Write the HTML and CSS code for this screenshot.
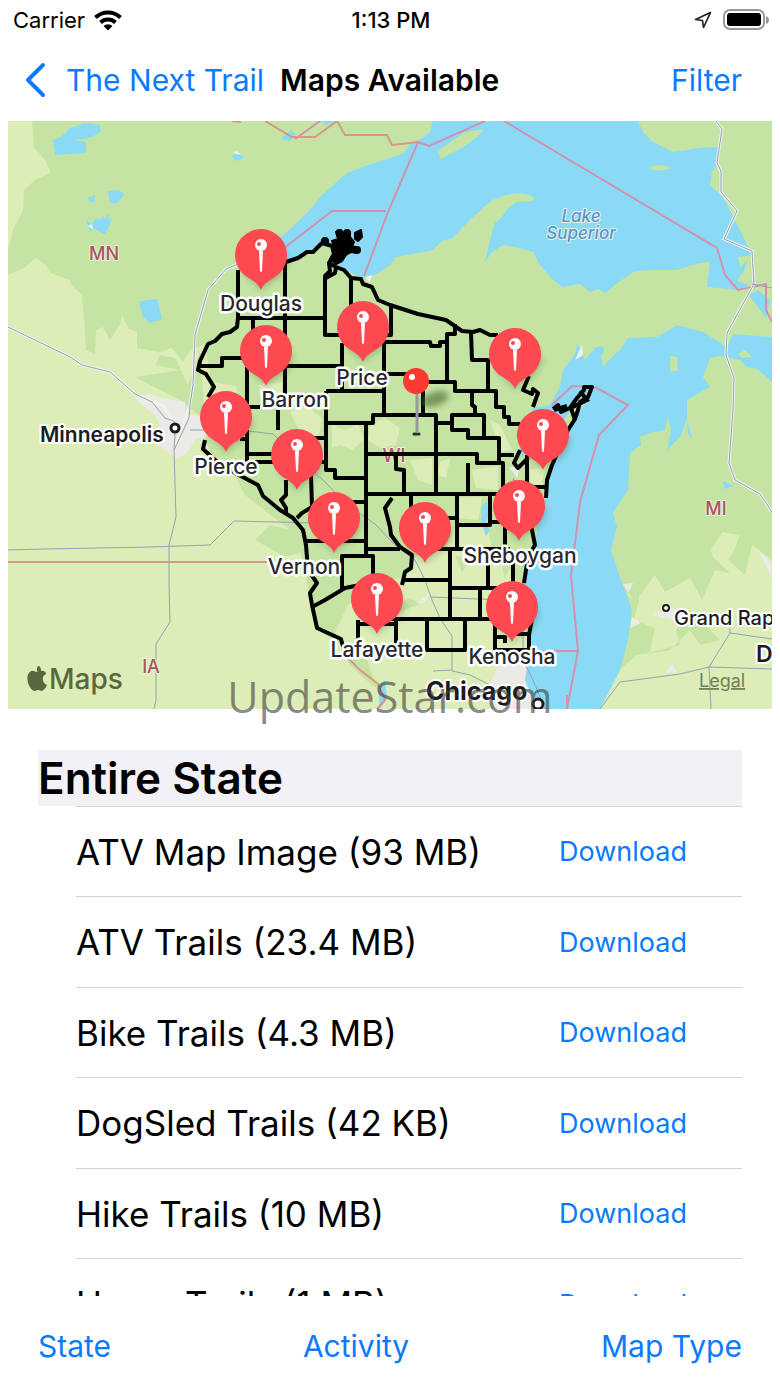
FILE: index.html
```html
<!DOCTYPE html>
<html lang="en">
<head>
  <meta charset="UTF-8">
  <meta name="viewport" content="width=device-width, initial-scale=1">
  <title>Maps Available</title>
  <link rel="stylesheet" href="styles.css">
</head>
<body>
  <div class="status-bar">
    <div class="carrier">
      <span>Carrier</span>
      <svg width="30" height="22" viewBox="0 0 30 22">
        <g fill="none" stroke="#000" stroke-width="4">
          <path d="M2.500 8.500A18 18 0 0 1 27.500 8.500"/>
          <path d="M7.500 13.500A11 11 0 0 1 22.500 13.500"/>
        </g>
        <path d="M10.500 17a6.500 6.500 0 0 1 9 0L15 21.500z"/>
      </svg>
    </div>
    <div class="time">1:13 PM</div>
    <div class="status-icons">
      <svg width="18" height="18" viewBox="0 0 18 18">
        <path d="M16.500 1.500L1.500 8.500L8.500 9.500L9.500 16.500Z" fill="none" stroke="#222" stroke-width="1.700" stroke-linejoin="round"/>
      </svg>
      <svg width="46" height="22" viewBox="0 0 46 22">
        <rect x="1" y="1" width="40" height="19" rx="6" fill="none" stroke="#999" stroke-width="2"/>
        <rect x="4" y="4" width="34" height="13" rx="3"/>
        <path d="M43 7q3 1 3 4t-3 4z" fill="#999"/>
      </svg>
    </div>
  </div>

  <nav class="nav-bar">
    <a class="back" href="#">
      <svg width="22" height="36" viewBox="0 0 22 36">
        <path d="M19 3L4 18L19 33" fill="none" stroke="#0a7aff" stroke-width="4" stroke-linecap="round" stroke-linejoin="round"/>
      </svg>
      <span>The Next Trail</span>
    </a>
    <h1>Maps Available</h1>
    <button class="filter">Filter</button>
  </nav>

  <div class="map">
    <svg class="map-canvas" viewBox="8 121 764 588">
      <defs>
        <g id="pin">
          <path class="pin-shadow" d="M-15 22Q-7 27 0 36Q8 28 20 22L28 7L20 -10L-20 0Z"/>
          <path d="M0 35C-3 28 -8 26 -14 22A26 26 0 1 1 14 22C8 26 3 28 0 35Z" fill="#fe4950"/>
          <path d="M-2 -4L-1 16Q0 18 1 16L2 -4Z" fill="#fff"/>
          <circle cy="-10" r="6" fill="#fff"/>
          <circle cx="-2" cy="-11" r="2" fill="#fe4950"/>
        </g>
        <filter id="soft" x="-50%" y="-50%" width="200%" height="200%">
          <feGaussianBlur stdDeviation="3"/>
        </filter>
      </defs>

      <!-- land -->
      <rect x="8" y="121" width="764" height="588" fill="#c5e4a3"/>
      <g fill="#dcedb7">
        <path d="M8 121H32L34 147L45 160L51 173L35 180L24 190L23 210L13 230L8 250Z"/>
        <path d="M8 275L24 268L36 258L46 265L50 273L70 280L72 286L82 295L85 330L86 350L95 354L96 330L103 327L110 340L120 325L122 315L129 329L137 332L137 348L148 350L160 352L172 348L183 362L190 350L205 345L210 375L205 440L215 460L237 476L262 500L290 517L303 535L270 540L300 552L310 595L317 630L342 645H527L540 709H8Z"/>
        <path d="M600 709L620 670L636 655L650 652L655 628L634 620L640 595L655 575L665 592L690 578L702 600L715 570L730 573L713 557L711 550L722 532L740 535L735 548L728 560L745 575L752 545L772 560V709Z"/>
        <path d="M332 425L345 430L358 424L364 440L352 450L340 445L332 448ZM370 425L385 418L400 428L396 445L380 448L368 440Z"/>
        <path d="M410 460L432 458L432 485L418 480ZM440 462L450 458L446 478L438 475Z"/>
        <path d="M348 605L370 585L400 578L418 555L445 550L455 528L488 527L492 550L505 560L512 575L526 590L530 650H345L335 632Z"/>
        <path d="M458 498L482 497L478 520L458 518ZM472 470L498 466V490L476 488ZM490 420L500 425L512 450L500 452ZM530 470L545 466L542 485L530 484Z"/>
        <path d="M258 385L282 382V405L262 402ZM290 412L305 405L322 418L318 440L300 432ZM210 382L236 386L240 400L215 400Z"/>
      </g>
      <g fill="#c5e4a3">
        <path d="M135 377L180 370L155 365L160 355L175 358L188 385L200 350L205 420L180 400Z"/>
        <path d="M235 475L262 470L290 490L310 520L315 575L300 570L310 550L285 557L255 540L270 525L290 530L245 495Z"/>
        <path d="M344 655L365 650L370 670L380 690L372 685L350 665Z"/>
        <path d="M395 605L410 598L420 604L400 612ZM455 555L470 560L462 572Z"/>
        <path d="M640 655L670 650L690 630L700 645L720 640L700 620L690 610L676 630L680 645L660 650Z"/>
        <path d="M500 555L513 555L505 580Z"/>
      </g>
      <g fill="#eceae6">
        <path d="M135 397L150 394L160 398L185 402L185 414L210 418L210 435L195 440L188 452L177 459L165 450L150 440L160 425L155 415L138 402Z"/>
        <path d="M497 668L520 662L530 670L541 709H495L488 690Z"/>
        <path d="M652 615L668 605L678 612L685 622L665 618ZM623 584L633 583L628 594L634 602ZM632 617L641 623L630 628ZM665 673L672 664L677 672ZM757 548L770 562L772 578L768 570ZM416 604L430 592L425 602ZM509 467L520 467L517 478Z"/>
      </g>

      <!-- water -->
      <g fill="#8adaf6">
        <path d="M433 121L430 132L423 138L412 142L404 153L390 158L365 166L347 173L332 186L320 197L308 212L287 232L262 252V270L287 262L310 252L333 243L329 264L345 270L363 278L375 275L390 265L396 257L407 255L433 250L442 241L453 238L463 227L473 217L485 206L493 200L505 195L517 193L530 195L534 198L533 201L517 202L508 208L502 217L495 223L492 232L485 262L492 252L503 245L515 247L533 252L540 265L553 280L563 287L580 284L590 292L598 289L605 293L616 284L635 271L650 270L677 270L695 264L710 262L707 287L720 288L737 290L750 285L737 281L745 269L747 260L740 268L738 257L752 255L735 220L723 197L710 185L712 172L716 167L718 147L700 148L673 152L653 142L643 132L638 121Z"/>
        <path d="M628 338L657 337L677 325L703 332L727 347L733 334L772 337V382L757 369L747 367L740 360L722 356L710 358L703 377L710 387L687 400L687 419L680 437L667 450L671 430L668 417L665 430L653 432L640 437L641 445L630 453L628 490L613 513L617 527L611 550L620 577L632 610L628 640L620 670L600 709H537L525 680L527 667L530 627L523 583L530 557L537 533L536 510L547 497L549 475L557 455L567 433L587 400L592 388L575 405L560 425L555 415L530 450L513 463L520 450L533 408L550 405L560 387L563 370L575 354L577 344L585 360L596 347L603 346L606 360L620 350Z"/>
        <path d="M53 140L61 137L70 128L85 123L100 125L101 132L92 137L84 139L75 140L86 142L86 153L55 155ZM87 198L95 195L94 203L91 202ZM108 191L119 190L124 194L118 203L110 203ZM86 220L92 224L96 218L100 220L103 215L104 219L109 213L108 219L112 218L109 227L105 234L94 229L90 231ZM139 302L147 300L157 299L162 319L150 323L143 317ZM231 156L237 153L245 157L237 161ZM281 139L291 130L296 134L290 141ZM322 121H336L326 125ZM482 505L487 502L489 515L485 523L490 530L486 536L481 522ZM723 481L734 486L724 489ZM687 420L692 438L688 434ZM749 295L758 290L770 300L766 318ZM316 529L307 524L316 534ZM378 688L385 680L387 699L380 709Z"/>
      </g>
      <g fill="#c5e4a3">
        <path d="M437 151L441 159L463 147L476 138L484 129L465 132Z"/>
        <path d="M648 168Q658 162 671 168Q658 173 648 168Z"/>
        <path d="M670 356L677 357L678 370L670 372ZM603 367L622 346L614 343L601 355ZM738 354L745 350L752 357L742 358Z"/>
      </g>
      <path class="dry" d="M582 345L583 355L575 360ZM366 277L372 275L369 283ZM233 153L237 151L241 155ZM88 226L92 224L93 230Z"/>

      <!-- state and country borders -->
      <g fill="none" stroke="#d391b0" stroke-width="2">
        <path d="M504 121L717 248L725 275L738 290L766 284V310L772 322"/>
        <path d="M485 121L429 146L418 142L388 212L364 276"/>
        <path d="M283 249L332 211H386M295 139L320 121"/>
        <path d="M567 695V709L578 651L571 576L580 502L599 435L628 405L595 387L572 386L552 405M540 651H578"/>
      </g>
      <g fill="none" stroke="#dd9585" stroke-width="2">
        <path d="M232 121L241 122M265 121L292 137L315 137L337 121L345 135H387L392 145L418 142"/>
        <path d="M8 562H275M345 655L360 670L378 684L385 700L377 709"/>
      </g>

      <!-- roads -->
      <g class="road-edge">
        <path d="M716 121L722 129L717 163L721 171V192L737 211L724 239L752 251L754 284L727 333L726 355L734 378L733 410L729 463L735 480L760 494L772 512"/>
        <path d="M8 327L70 357L82 365L110 372L135 394L165 407L175 425M238 264L226 269L208 290L195 335L193 385L190 405L174 450"/>
      </g>
      <g class="road">
        <path d="M716 121L722 129L717 163L721 171V192L737 211L724 239L752 251L754 284L727 333L726 355L734 378L733 410L729 463L735 480L760 494L772 512"/>
        <path d="M752 284L772 288M8 327L70 357L82 365L110 372L135 394L152 402L165 418L174 421L175 437L174 450L176 517L169 545V585L170 622L156 644V700L154 709"/>
        <path d="M238 264L226 269L208 290L195 335L193 385L190 405L189 418L174 450"/>
        <path d="M8 550L45 549L150 547L210 545L234 521L315 523M190 430H240L273 434L295 455L325 482L347 505L375 524L395 545L415 560L425 580L432 600L441 620L452 636V670L433 671M452 671L470 675L500 690"/>
        <path d="M431 597L500 600M513 478L522 500M530 557L523 580L523 660L533 680L545 709"/>
        <path d="M600 709L620 682L680 674L709 667L772 669M709 667L730 633L772 639M730 633V628M709 667L711 709"/>
      </g>

      <!-- state names -->
      <g class="state">
        <text x="104" y="260">MN</text>
        <text x="151" y="673">IA</text>
        <text x="716" y="515">MI</text>
        <text x="394" y="462">WI</text>
      </g>

      <!-- county lines -->
      <g class="county">
        <path d="M286 262L298 258L307 252L313 252L322 243L332 246L334 254L329 263L336 267L344 270L351 278L361 279L363 284L372 287L378 300L390 305L418 314L446 320L462 331L473 332L480 330L490 335L498 335"/>
        <path d="M329 263L330 271L325 276V335H352M336 267L335 273L326 278M351 278V318M391 305V335H382"/>
        <path d="M238 270V318L237 327L230 332L222 334L215 341L208 344L200 361L198 370L206 374L214 387L208 397M238 318H326M253 318V335M285 262V395M200 366H222V358H245M247 367V407H260M285 366H342M342 343V390M326 391H383M326 391V470H335V478H365"/>
        <path d="M384 415V342H430L431 346H440V342H447V334H455V324M447 334V382M384 374H416M423 382V415M410 382H455V391H496V407H504V417H509V424H520M471 333L472 360H488V390M472 391V405L475 407V415"/>
        <path d="M327 423H373V415H436V495M436 423H452V415H484V438M452 423V430H468V438H499V463M499 455H514M365 454H477V463H503V490M468 495V463M366 423V555M396 455V469L404 470V494M366 494H510"/>
        <path d="M411 495V510M440 518H457M457 495V549M457 525H490V495M490 522H502M505 515V545M366 549H400M430 549H510"/>
        <path d="M392 498L385 508L390 527L391 535L400 547L412 555L411 568L405 572L402 585M402 580H450M450 550V618M450 588H512M488 550V587M513 560V585M480 588V617M380 619H510M396 620V650M427 620V650H465V620M495 650H529M495 625V650M495 637H505V643M515 634H530"/>
        <path d="M342 590V556H373V580M312 607L325 600L345 588L360 585M358 620V645M358 624H398M305 541H365M350 502H365"/>
        <path d="M278 410V430M247 430V462M240 439H247M248 454H275M248 462H275M310 438H327M320 462H327M286 480V495L281 500L286 508V514M311 475L312 507L302 513L297 518M527 455V487H545"/>
        <path d="M205 440L203 449L215 460L237 474L258 485L263 496L280 510L293 518L303 530L306 545L308 570L317 583L310 593L312 605L317 628L330 634L341 639L344 650"/>
        <path d="M529 376L523 390L532 394L533 389L538 393L533 407M520 450L514 463L518 468L528 458M553 409L558 405L561 412L570 408L577 398L584 390L584 387L592 387L588 397L580 402L578 410L575 419L568 430L552 465L547 480L546 498M531 525L535 545L528 557L524 583M532 619L529 635V650"/>
      </g>
      <!-- islands -->
      <g stroke="#000" stroke-width="2" stroke-linejoin="round">
        <path d="M355 233L361 230L362 237L358 241L355 239Z"/>
        <path d="M332 241L338 239L336 232L341 230L344 234L350 232L350 237L354 242L352 246L358 248L357 253L351 252L346 255L342 261L336 264L332 260L337 254Z"/>
        <circle cx="339" cy="232" r="2"/>
        <circle cx="325" cy="241" r="3"/>
        <circle cx="357" cy="250" r="3"/>
        <circle cx="347" cy="233" r="3"/>
      </g>
      <path d="M554 410L567 406M580 391L587 400L571 408L575 420" fill="none" stroke="#000" stroke-width="4"/>

      <g class="lake">
        <text x="581" y="222">Lake</text>
        <text x="581" y="239">Superior</text>
      </g>

      <!-- cities -->
      <g class="city">
        <text x="40" y="442">Minneapolis</text>
        <text x="674" y="625" class="small">Grand Rapids</text>
        <text x="756" y="662" class="mid">Detroit</text>
        <text x="426" y="700" class="big">Chicago</text>
      </g>
      <g fill="#fff" stroke="#1c1c1c" stroke-width="3">
        <circle cx="175" cy="428" r="4"/>
        <circle cx="666" cy="608" r="3" stroke-width="2"/>
        <circle cx="538" cy="704" r="5"/>
      </g>

      <!-- pins -->
      <ellipse cx="435" cy="399" rx="14" ry="7" fill="#54723d" opacity=".7" filter="url(#soft)" transform="rotate(-18 435 399)"/>
      <path d="M414 434H419" stroke="#243524" stroke-width="3" stroke-linecap="round"/>
      <path d="M417 390V433" stroke="#999" stroke-width="3"/>
      <circle cx="416" cy="381" r="13" fill="#fe3a30"/>
      <circle cx="412" cy="377" r="3" fill="#fff"/>
      <use href="#pin" x="261" y="255"/>
      <use href="#pin" x="363" y="327"/>
      <use href="#pin" x="266" y="351"/>
      <use href="#pin" x="515" y="354"/>
      <use href="#pin" x="226" y="417"/>
      <use href="#pin" x="543" y="435"/>
      <use href="#pin" x="297" y="455"/>
      <use href="#pin" x="334" y="518"/>
      <use href="#pin" x="425" y="528"/>
      <use href="#pin" x="519" y="506"/>
      <use href="#pin" x="377" y="599"/>
      <use href="#pin" x="512" y="607"/>
      <g class="pin-label">
        <text x="261" y="311">Douglas</text>
        <text x="362" y="385">Price</text>
        <text x="295" y="407">Barron</text>
        <text x="226" y="474">Pierce</text>
        <text x="304" y="574">Vernon</text>
        <text x="377" y="657">Lafayette</text>
        <text x="512" y="664">Kenosha</text>
        <text x="520" y="563">Sheboygan</text>
      </g>

      <!-- attribution -->
      <path d="M41 671Q41 666 38 666Q36 668 37 671ZM36 672Q40 670 44 671Q46 672 46 674Q42 676 43 680Q43 683 47 685Q44 691 41 691Q38 689 35 691Q31 691 28 683Q26 674 31 671Q33 670 36 672Z" fill="#59683f"/>
      <text class="maps-logo" x="49" y="689">Maps</text>
      <a href="#"><text class="legal" x="699" y="687">Legal</text></a>
    </svg>
    <div class="watermark">UpdateStar.com</div>
  </div>

  <main class="downloads">
    <h2>Entire State</h2>
    <ul>
      <li><span>ATV Map Image (93 MB)</span><button>Download</button></li>
      <li><span>ATV Trails (23.4 MB)</span><button>Download</button></li>
      <li><span>Bike Trails (4.3 MB)</span><button>Download</button></li>
      <li><span>DogSled Trails (42 KB)</span><button>Download</button></li>
      <li><span>Hike Trails (10 MB)</span><button>Download</button></li>
      <li><span>Horse Trails (1 MB)</span><button>Download</button></li>
    </ul>
  </main>

  <footer class="toolbar">
    <button>State</button>
    <button>Activity</button>
    <button>Map Type</button>
  </footer>
</body>
</html>
```
FILE: styles.css
```css
* {
  box-sizing: border-box;
}
body {
  margin: 0;
  height: 100vh;
  display: flex;
  flex-direction: column;
  background: white;
  color: black;
  font-family: Inter, "Liberation Sans", sans-serif;
}
button {
  padding: 0;
  border: none;
  background: none;
  color: #0a7aff;
  font-family: inherit;
  font-size: 30px;
  cursor: pointer;
}
a {
  color: #0a7aff;
  text-decoration: none;
}

.status-bar {
  display: grid;
  grid-template-columns: 1fr auto 1fr;
  align-items: center;
  height: 40px;
  padding: 0 11px 0 13px;
  font-size: 22px;
}
.carrier {
  display: flex;
  align-items: center;
  gap: 8px;
}
.time {
  font-weight: 500;
}
.status-icons {
  display: flex;
  align-items: center;
  justify-content: flex-end;
  gap: 11px;
}

.nav-bar {
  display: flex;
  align-items: center;
  height: 81px;
  padding: 0 38px 2px 24px;
  font-size: 30px;
}
.back {
  display: flex;
  align-items: center;
  gap: 20px;
}
.nav-bar h1 {
  margin: 0 auto 0 16px;
  font-size: 30px;
  font-weight: 600;
}

.map {
  position: relative;
  margin: 0 8px;
}
.map-canvas {
  display: block;
  width: 100%;
}
.watermark {
  position: absolute;
  left: 0;
  right: 0;
  bottom: -18px;
  text-align: center;
  font-family: "Open Sans", "Noto Sans", sans-serif;
  font-size: 43px;
  line-height: 60px;
  color: rgba(60, 60, 60, 0.6);
}
.road {
  fill: none;
  stroke: #93a2b4;
  stroke-width: 1;
}
.road-edge {
  fill: none;
  stroke: #edf2ed;
  stroke-width: 3;
}
.dry {
  fill: #f3f1ea;
}
.county {
  fill: none;
  stroke: black;
  stroke-width: 4;
  stroke-linejoin: round;
}
.pin-shadow {
  fill: #3f5c35;
  opacity: 0.3;
  filter: blur(3px);
}
.map text {
  paint-order: stroke;
  stroke: white;
  stroke-linejoin: round;
}
.map .state {
  font-size: 18px;
  font-weight: 500;
  text-anchor: middle;
  fill: #ac545b;
  stroke-width: 2px;
}
.map .state text,
.map .lake text {
  stroke: #e8f3e0;
}
.map .lake {
  font-size: 17px;
  font-weight: 500;
  font-style: italic;
  text-anchor: middle;
  fill: #5a94cf;
  stroke-width: 2px;
}
.map .city {
  font-size: 21px;
  font-weight: 600;
  fill: #1c1c1e;
  stroke-width: 4px;
}
.map .city .small {
  font-size: 20px;
  font-weight: 500;
}
.map .city .mid {
  font-size: 23px;
}
.map .city .big {
  font-size: 25px;
  font-weight: 700;
}
.map .pin-label {
  font-size: 21px;
  font-weight: 500;
  text-anchor: middle;
  fill: #28282d;
  stroke-width: 5px;
}
.map .maps-logo {
  font-size: 28px;
  font-weight: 500;
  fill: #59683f;
  stroke: none;
}
.map .legal {
  font-size: 18px;
  fill: #70805b;
  stroke: none;
  text-decoration: underline;
}

.downloads {
  flex: 1;
  min-height: 0;
  overflow: hidden;
  margin: 41px 38px 0;
}
.downloads h2 {
  margin: 0;
  height: 56px;
  font-size: 44px;
  font-weight: 600;
  line-height: 56px;
  background: #f2f1f6;
}
.downloads ul {
  margin: 0 0 0 38px;
  padding: 0;
  list-style: none;
  border-top: 1px solid #d4d4d6;
}
.downloads li {
  display: flex;
  align-items: center;
  justify-content: space-between;
  height: 90px;
  padding-right: 55px;
  border-bottom: 1px solid #d4d4d6;
  font-size: 35px;
}
.downloads li:nth-child(even) {
  height: 91px;
}
.downloads button {
  font-size: 27px;
}

.toolbar {
  display: flex;
  justify-content: space-between;
  align-items: center;
  height: 91px;
  padding: 8px 38px 0;
}
```
